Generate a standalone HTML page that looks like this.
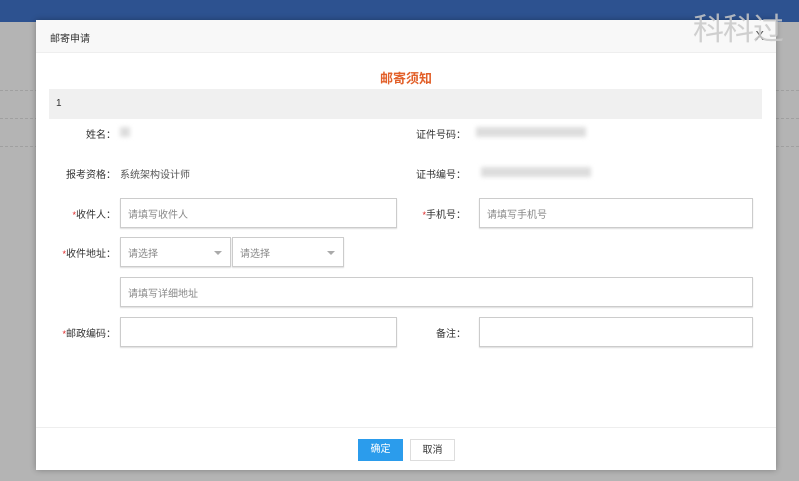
<!DOCTYPE html>
<html><head><meta charset="utf-8"><style>
*{margin:0;padding:0;box-sizing:border-box}
body{width:799px;height:481px;overflow:hidden;background:#b4b4b4;font-family:"Liberation Sans","Noto Sans CJK SC",sans-serif;font-size:10px;color:#333;position:relative}
.top{position:absolute;left:0;top:0;width:799px;height:22px;background:#2d5290}
.line{position:absolute;left:0;width:799px;border-top:1px dashed #a0a0a0}
.modal{position:absolute;left:36px;top:20px;width:740px;height:450px;background:#fff;box-shadow:0 0 6px rgba(0,0,0,.3)}
.hd{height:33px;background:#f8f8f8;border-bottom:1px solid #eee;padding:10px 14px;font-size:10px}
.x{position:absolute;right:12px;top:8px;font-size:13px;color:#555}
.ttl{position:absolute;top:48px;width:100%;text-align:center;color:#e2602a;font-weight:bold;font-size:13px}
.bar{position:absolute;left:13px;top:69px;width:713px;height:30px;background:#f0f0f0;padding:9px 7px;font-size:10px}
.lb{position:absolute;text-align:right;width:80px;font-size:10px}
.req{color:#d22;font-size:9px}
.val{position:absolute;color:#555}
.blur{position:absolute;background:#ddd;filter:blur(2px)}
.in{position:absolute;border:1px solid #ccc;height:30px;padding:7px 7px;color:#888;font-size:10px;box-shadow:0 1px 1px #ddd}
.arr{position:absolute;right:8px;top:13px;width:0;height:0;border-left:4px solid transparent;border-right:4px solid transparent;border-top:4px solid #aaa}
.ft{position:absolute;top:407px;width:100%;border-top:1px solid #eee}
.btn{position:absolute;top:419px;width:45px;height:22px;text-align:center;line-height:22px;font-size:10px}
.wm{position:absolute;left:693px;top:4px;font-size:31px;color:rgba(200,200,200,.85);letter-spacing:-1px}
</style></head><body>
<div class="top"></div>
<div class="line" style="top:90px"></div>
<div class="line" style="top:118px"></div>
<div class="line" style="top:146px"></div>
<div class="modal">
<div class="hd">邮寄申请</div>
<div class="x">X</div>
<div class="ttl">邮寄须知</div>
<div class="bar">1</div>
<div class="lb" style="left:0;top:106px">姓名：</div>
<div class="blur" style="left:84px;top:107px;width:10px;height:10px"></div>
<div class="lb" style="left:350px;top:106px">证件号码：</div>
<div class="blur" style="left:440px;top:107px;width:110px;height:10px"></div>
<div class="lb" style="left:0;top:146px">报考资格：</div>
<div class="val" style="left:84px;top:146px">系统架构设计师</div>
<div class="lb" style="left:350px;top:146px">证书编号：</div>
<div class="blur" style="left:445px;top:147px;width:110px;height:10px"></div>
<div class="lb" style="left:0;top:186px"><span class="req">*</span>收件人：</div>
<div class="in" style="left:84px;top:178px;width:277px">请填写收件人</div>
<div class="lb" style="left:350px;top:186px"><span class="req">*</span>手机号：</div>
<div class="in" style="left:443px;top:178px;width:274px">请填写手机号</div>
<div class="lb" style="left:0;top:225px"><span class="req">*</span>收件地址：</div>
<div class="in" style="left:84px;top:217px;width:111px">请选择<div class="arr"></div></div>
<div class="in" style="left:196px;top:217px;width:112px">请选择<div class="arr"></div></div>
<div class="in" style="left:84px;top:257px;width:633px">请填写详细地址</div>
<div class="lb" style="left:0;top:305px"><span class="req">*</span>邮政编码：</div>
<div class="in" style="left:84px;top:297px;width:277px"></div>
<div class="lb" style="left:350px;top:305px">备注：</div>
<div class="in" style="left:443px;top:297px;width:274px"></div>
<div class="ft"></div>
<div class="btn" style="left:322px;background:#2b9cec;color:#fff">确定</div>
<div class="btn" style="left:374px;border:1px solid #ddd;color:#333">取消</div>
</div>
<div class="wm">科科过</div>
</body></html>
